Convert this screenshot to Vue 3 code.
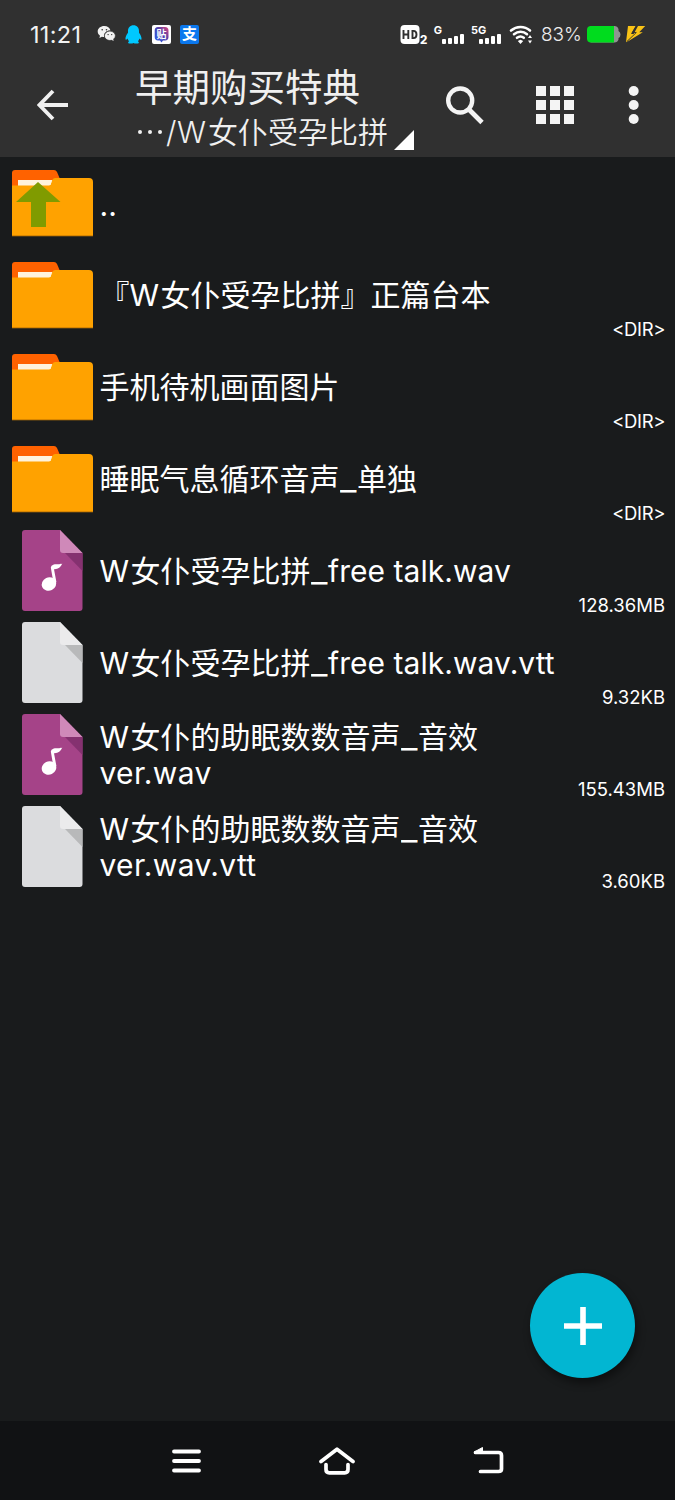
<script setup>
const rows = [
  { icon: 'up', lines: [['..']], size: '' },
  { icon: 'folder', lines: [['『', 'W', '女仆受孕比拼』正篇台本']], size: '<DIR>' },
  { icon: 'folder', lines: [['手机待机画面图片']], size: '<DIR>' },
  { icon: 'folder', lines: [['睡眠气息循环音声', '_', '单独']], size: '<DIR>' },
  { icon: 'audio', lines: [['W', '女仆受孕比拼', '_', 'free talk.wav']], size: '128.36MB' },
  { icon: 'file', lines: [['W', '女仆受孕比拼', '_', 'free talk.wav.vtt']], size: '9.32KB' },
  { icon: 'audio', lines: [['W', '女仆的助眠数数音声', '_', '音效'], ['ver.wav']], size: '155.43MB' },
  { icon: 'file', lines: [['W', '女仆的助眠数数音声', '_', '音效'], ['ver.wav.vtt']], size: '3.60KB' },
]
const cells = [0, 14, 28]

function runClass(s) {
  return { w: s === 'W', under: s === '_', ver: s.startsWith('ver'), talk: s.startsWith('free'), parent: s === '..' }
}
</script>

<template>
  <div class="screen">
    <header class="top">
      <div class="status">
        <span class="clock">11:21</span>
        <svg class="wechat" width="19" height="18" viewBox="0 0 19 18">
          <path d="M7.3 1C3.5 1 .7 3.400.7 6.500c0 1.800.9 3.200 2.300 4.200l-.6 2.300 2.500-1.300c.8.2 1.500.3 2.300.3C6.500 8 9.500 5.300 13.500 5.500 13 2.800 10.400 1 7.300 1z" fill="#f2f2f2" />
          <ellipse cx="12.900" cy="10.800" rx="5.500" ry="4.700" fill="#f2f2f2" stroke="#303030" stroke-width=".7" />
          <path d="M14 14.500l2.600 1.500-.5-2.300z" fill="#f2f2f2" />
          <circle cx="5.200" cy="4.700" r=".8" fill="#303030" /><circle cx="9.500" cy="4.700" r=".8" fill="#303030" />
          <circle cx="11.100" cy="9.600" r=".7" fill="#303030" /><circle cx="14.700" cy="9.600" r=".7" fill="#303030" />
        </svg>
        <svg class="qq" width="17" height="19" viewBox="0 0 17 19">
          <path d="M8.500.3C5 .3 3 2.800 3 6v1.700C1.500 9.600.2 12.200.5 14.300c.2.900 1 .3 2-.9.300 1.200.8 2 1.600 2.800-1.100.5-1.400 2-.2 2.200 1.500.3 3.600.2 4.600-.4 1 .6 3.100.7 4.600.4 1.200-.2.900-1.700-.2-2.200.8-.8 1.300-1.600 1.600-2.800 1 1.200 1.800 1.800 2 .9.300-2.100-1-4.700-2.500-6.600V6C14 2.800 12 .3 8.500.3z" fill="#00c8ff" />
        </svg>
        <span class="app tie">
          <svg width="19" height="19" viewBox="0 0 19 19">
            <defs><linearGradient id="tie" x1="0" y1="1" x2="1" y2="0"><stop offset="0" stop-color="#2d62f0" /><stop offset=".55" stop-color="#4a40ad" /><stop offset="1" stop-color="#e0457c" /></linearGradient></defs>
            <path d="M6 2h7q3.500 0 3.500 3.500v6.500q0 3.300-3.500 3.500h-2l-1.500 2-1.500-2H6Q2.700 15.300 2.700 12V5.500Q2.700 2 6 2z" fill="url(#tie)" />
            <text x="9.500" y="12.600" text-anchor="middle" font-size="10" font-weight="700" fill="#fff">贴</text>
          </svg>
        </span>
        <span class="app pay">支</span>
        <span class="grow"></span>
        <svg class="signals" width="136" height="30" viewBox="0 0 136 30">
          <rect x=".5" y="4" width="19" height="19" rx="4" fill="#fff" />
          <g fill="none" stroke="#303030" stroke-width="1.900"><path d="M3.500 9v9M8.300 9v9M3.500 13.500h4.800M11.500 9.900h2c2 0 3 1.300 3 3.600s-1 3.600-3 3.600h-1v-7" /></g>
          <text x="20" y="22.500" font-size="11.500" font-weight="800" fill="#fff">2</text>
          <text x="33.800" y="12.800" font-size="11" font-weight="700" fill="#fff">G</text>
          <text x="71" y="12.800" font-size="11" font-weight="700" fill="#fff">5G</text>
          <g fill="#fff">
            <rect x="42" y="18" width="4" height="5" rx="1" /><rect x="48" y="17" width="4" height="6" rx="1" /><rect x="54" y="15" width="4" height="8" rx="1" /><rect x="60" y="13" width="4" height="10" rx="1" />
            <rect x="79" y="18" width="4" height="5" rx="1" /><rect x="85" y="17" width="4" height="6" rx="1" /><rect x="91" y="15" width="4" height="8" rx="1" /><rect x="97" y="13" width="4" height="10" rx="1" />
            <path d="M120.500 18.700l2.700 1.300-2.700 3-2.700-3zM130 14l2 3h-4zM130 22.500l2-3h-4z" />
          </g>
          <g fill="none" stroke="#fff" stroke-width="2.600" stroke-linecap="round"><path d="M111 9.500c5.600-4.700 13.500-4.700 19 0M114 13.200c4-3.200 9.300-3.200 13 0M117 16.800c2.200-1.600 4.700-1.600 6.800 0" /></g>
        </svg>
        <span class="percent">83%</span>
        <svg class="battery" width="60" height="20" viewBox="0 0 60 20">
          <path d="M4.500 1h24q3 0 4 3v2q2 1 2 3.500t-2 3.500v1.500q-1 3-4 3h-24z" fill="#8f9591" />
          <path d="M5 1h23v16.500H5q-4 0-4-4V5q0-4 4-4z" fill="#00dc1e" />
          <path d="M42 1h7.500l-4.500 8h4L40 17.300z" fill="#fac316" />
          <path d="M52 1h7.200l-6 6.200h3.600L40.500 17.300l7-8z" fill="#fac316" />
          <path d="M50.700 1l-4.400 6.500h4L41 16.500" stroke="#303030" stroke-width=".9" fill="none" />
        </svg>
      </div>
      <div class="bar">
        <svg class="back" width="32" height="32" viewBox="0 0 32 32"><path d="M31 16H3M16 2L2.500 16 16 30" fill="none" stroke="#f0f0f0" stroke-width="3.800" /></svg>
        <div class="titles">
          <div class="title">早期购买特典</div>
          <div class="path"><span class="dots"><i></i><i></i><i></i></span><span class="slash">/</span><span class="w">W</span>女仆受孕比拼<svg class="corner" width="20" height="20"><path d="M20 0v20H0z" fill="#fff" /></svg></div>
        </div>
        <svg class="tools" width="196" height="40" viewBox="0 0 196 40">
          <g fill="none" stroke="#f4f4f4"><circle cx="15.200" cy="15.500" r="12" stroke-width="4.400" /><path d="M24.500 25L37 37.500" stroke-width="4.800" /></g>
          <g fill="#f4f4f4">
            <template v-for="y in cells" :key="y"><rect v-for="x in cells" :key="x" :x="91 + x" :y="1 + y" width="10" height="10" /></template>
            <circle v-for="y in cells" :key="'d' + y" cx="188.700" :cy="6 + y" r="5" />
          </g>
        </svg>
      </div>
    </header>

    <main class="list">
      <div v-for="(r, i) in rows" :key="i" class="row">
        <div class="ico">
          <svg v-if="r.icon === 'folder' || r.icon === 'up'" class="folder" width="82" height="68" viewBox="0 0 82 68">
            <path d="M0 16V3q0-3 3-3h39q2 0 3 2l3 7v7z" fill="#ff6200" />
            <path d="M6 10h36v7H6z" fill="#fff3dc" />
            <path d="M0 15.500h37q1.500 0 2-2l1-3q.8-2.500 3-2.500h34q4 0 4 4v54H0z" fill="#ffa200" />
            <path d="M6 10h34l-1.500 5H6z" fill="#fff3dc" />
            <path d="M0 65h81v1.200H0z" fill="#d98600" />
            <path v-if="r.icon === 'up'" d="M26 12l22.500 20H34v25H19V32H4z" fill="#809b00" />
          </svg>
          <svg v-else class="doc" width="61" height="81" viewBox="0 0 61 81">
            <path d="M3 0h35l22.500 23v55q0 3-3 3H3q-3 0-3-3V3q0-3 3-3z" :fill="r.icon === 'audio' ? '#a54388' : '#dbdcde'" />
            <path d="M43 23h17.500v18z" :fill="r.icon === 'audio' ? '#853170' : '#b8b9ba'" />
            <path d="M38 0l22.500 23H41q-3 0-3-3z" :fill="r.icon === 'audio' ? '#cf89b9' : '#ebebec'" />
            <g v-if="r.icon === 'audio'" fill="#fff">
              <ellipse cx="27" cy="54" rx="7.400" ry="6.700" transform="rotate(-25 27 54)" />
              <path d="M31.500 53L28.800 37.500q0-2.200 3-3c3-.6 5.200.5 8.500-.9q-2.500 6-8.300 5.600L34.400 52z" />
            </g>
          </svg>
        </div>
        <div class="name">
          <div v-for="(l, j) in r.lines" :key="j" class="line"><span v-for="(s, k) in l" :key="k" :class="runClass(s)">{{ s }}</span></div>
        </div>
        <div class="size" :class="{ dir: r.size === '<DIR>' }">{{ r.size }}</div>
      </div>
    </main>

    <div class="fab"><svg width="38" height="38" viewBox="0 0 38 38"><path d="M16.200 0h5.600v16.200H38v5.600H21.800V38h-5.600V21.800H0v-5.600h16.200z" fill="#fff" /></svg></div>

    <nav class="nav">
      <svg width="29" height="24" viewBox="0 0 29 24"><path d="M2 2.500h25M2 12h25M2 21.500h25" stroke="#fff" stroke-width="3.800" stroke-linecap="round" /></svg>
      <svg width="36" height="28" viewBox="0 0 36 28"><path d="M2 14.500L18 2.200l16 12.300M7 17.500v5q0 3.300 3.300 3.300h15.400q3.300 0 3.300-3.300v-5" fill="none" stroke="#fff" stroke-width="3.700" stroke-linecap="round" stroke-linejoin="round" /></svg>
      <svg width="31" height="27" viewBox="0 0 31 27"><path d="M2.500 5.500h23q3 0 3 3v13.500q0 2.500-3 2.500H7.500" fill="none" stroke="#fff" stroke-width="3.700" stroke-linecap="round" /><path d="M1.200 5L9.500.5v5.500H2z" fill="#fff" stroke="#fff" stroke-linejoin="round" /></svg>
    </nav>
  </div>
</template>

<style scoped>
.screen { width: 675px; height: 1500px; background: #191b1c; display: flex; flex-direction: column; position: relative; color: #fff; font-family: Inter, "Noto Sans CJK SC", sans-serif; overflow: hidden; }
.top { height: 157px; background: #303030; flex: none; }
.status { height: 68px; display: flex; align-items: center; padding: 0 30px; box-sizing: border-box; }
.clock { font-size: 23.500px; width: 67px; color: #f2f2f2; letter-spacing: .3px; line-height: 24px; padding-top: 2px; box-sizing: border-box; white-space: nowrap; }
.qq { margin-left: 9px; margin-right: 10px; }
.app { width: 19px; height: 19px; border-radius: 2px; overflow: hidden; }
.tie { background: #fff; }
.tie svg { display: block; }
.pay { background: #0b78ee; margin-left: 9px; font-size: 15px; font-weight: 700; line-height: 18px; text-align: center; }
.grow { flex: 1; }
.signals { margin-right: 5px; margin-top: 3px; }
.percent { font-size: 19px; width: 45px; color: #ededed; font-weight: 350; letter-spacing: -.1px; padding-top: 1px; }
.battery { margin-right: -1px; margin-top: 1px; }
.bar { height: 89px; display: flex; align-items: flex-start; }
.back { margin: 21px 66px 0 37px; flex: none; }
.titles { width: 310px; flex: none; color: #f0f0f0; white-space: nowrap; }
.title { font-size: 37.500px; line-height: 38px; padding-top: 1px; }
.path { font-size: 30px; line-height: 36px; margin-top: 7px; display: flex; height: 36px; font-weight: 350; }
.dots { width: 31px; display: flex; align-items: center; gap: 6px; padding-left: 3px; box-sizing: border-box; }
.dots i { width: 4px; height: 4px; border-radius: 50%; background: #f0f0f0; }
.slash { width: 11px; }
.corner { margin: 16px 0 0 6px; }
.tools { margin-top: 17px; }
.w { display: inline-block; width: 31px; }
.under { display: inline-block; width: 17.500px; transform: scaleX(1.2); transform-origin: left; }
.ver { letter-spacing: .35px; }
.talk { letter-spacing: .05px; }
.parent { position: relative; top: 2px; }
.list { flex: 1; }
.row { height: 92px; display: grid; grid-template-columns: 99.500px 1fr auto; align-items: center; padding-right: 10px; }
.ico { padding-left: 12px; display: flex; }
.folder { margin-top: 2px; }
.doc { margin-left: 10px; margin-top: -2px; }
.name { font-size: 30px; line-height: 36px; white-space: nowrap; }
.size { align-self: end; font-size: 18.500px; line-height: 24px; }
.dir { letter-spacing: -.4px; }
.fab { position: absolute; left: 530px; top: 1273px; width: 105px; height: 105px; border-radius: 50%; background: #02b6d2; display: flex; align-items: center; justify-content: center; box-shadow: 2px 5px 9px rgba(0, 0, 0, .45); }
.nav { height: 79px; background: #111214; display: flex; flex: none; align-items: center; justify-content: center; gap: 118px; padding-left: 1px; box-sizing: border-box; }
</style>
<style>
body { background: #191b1c; }
</style>
